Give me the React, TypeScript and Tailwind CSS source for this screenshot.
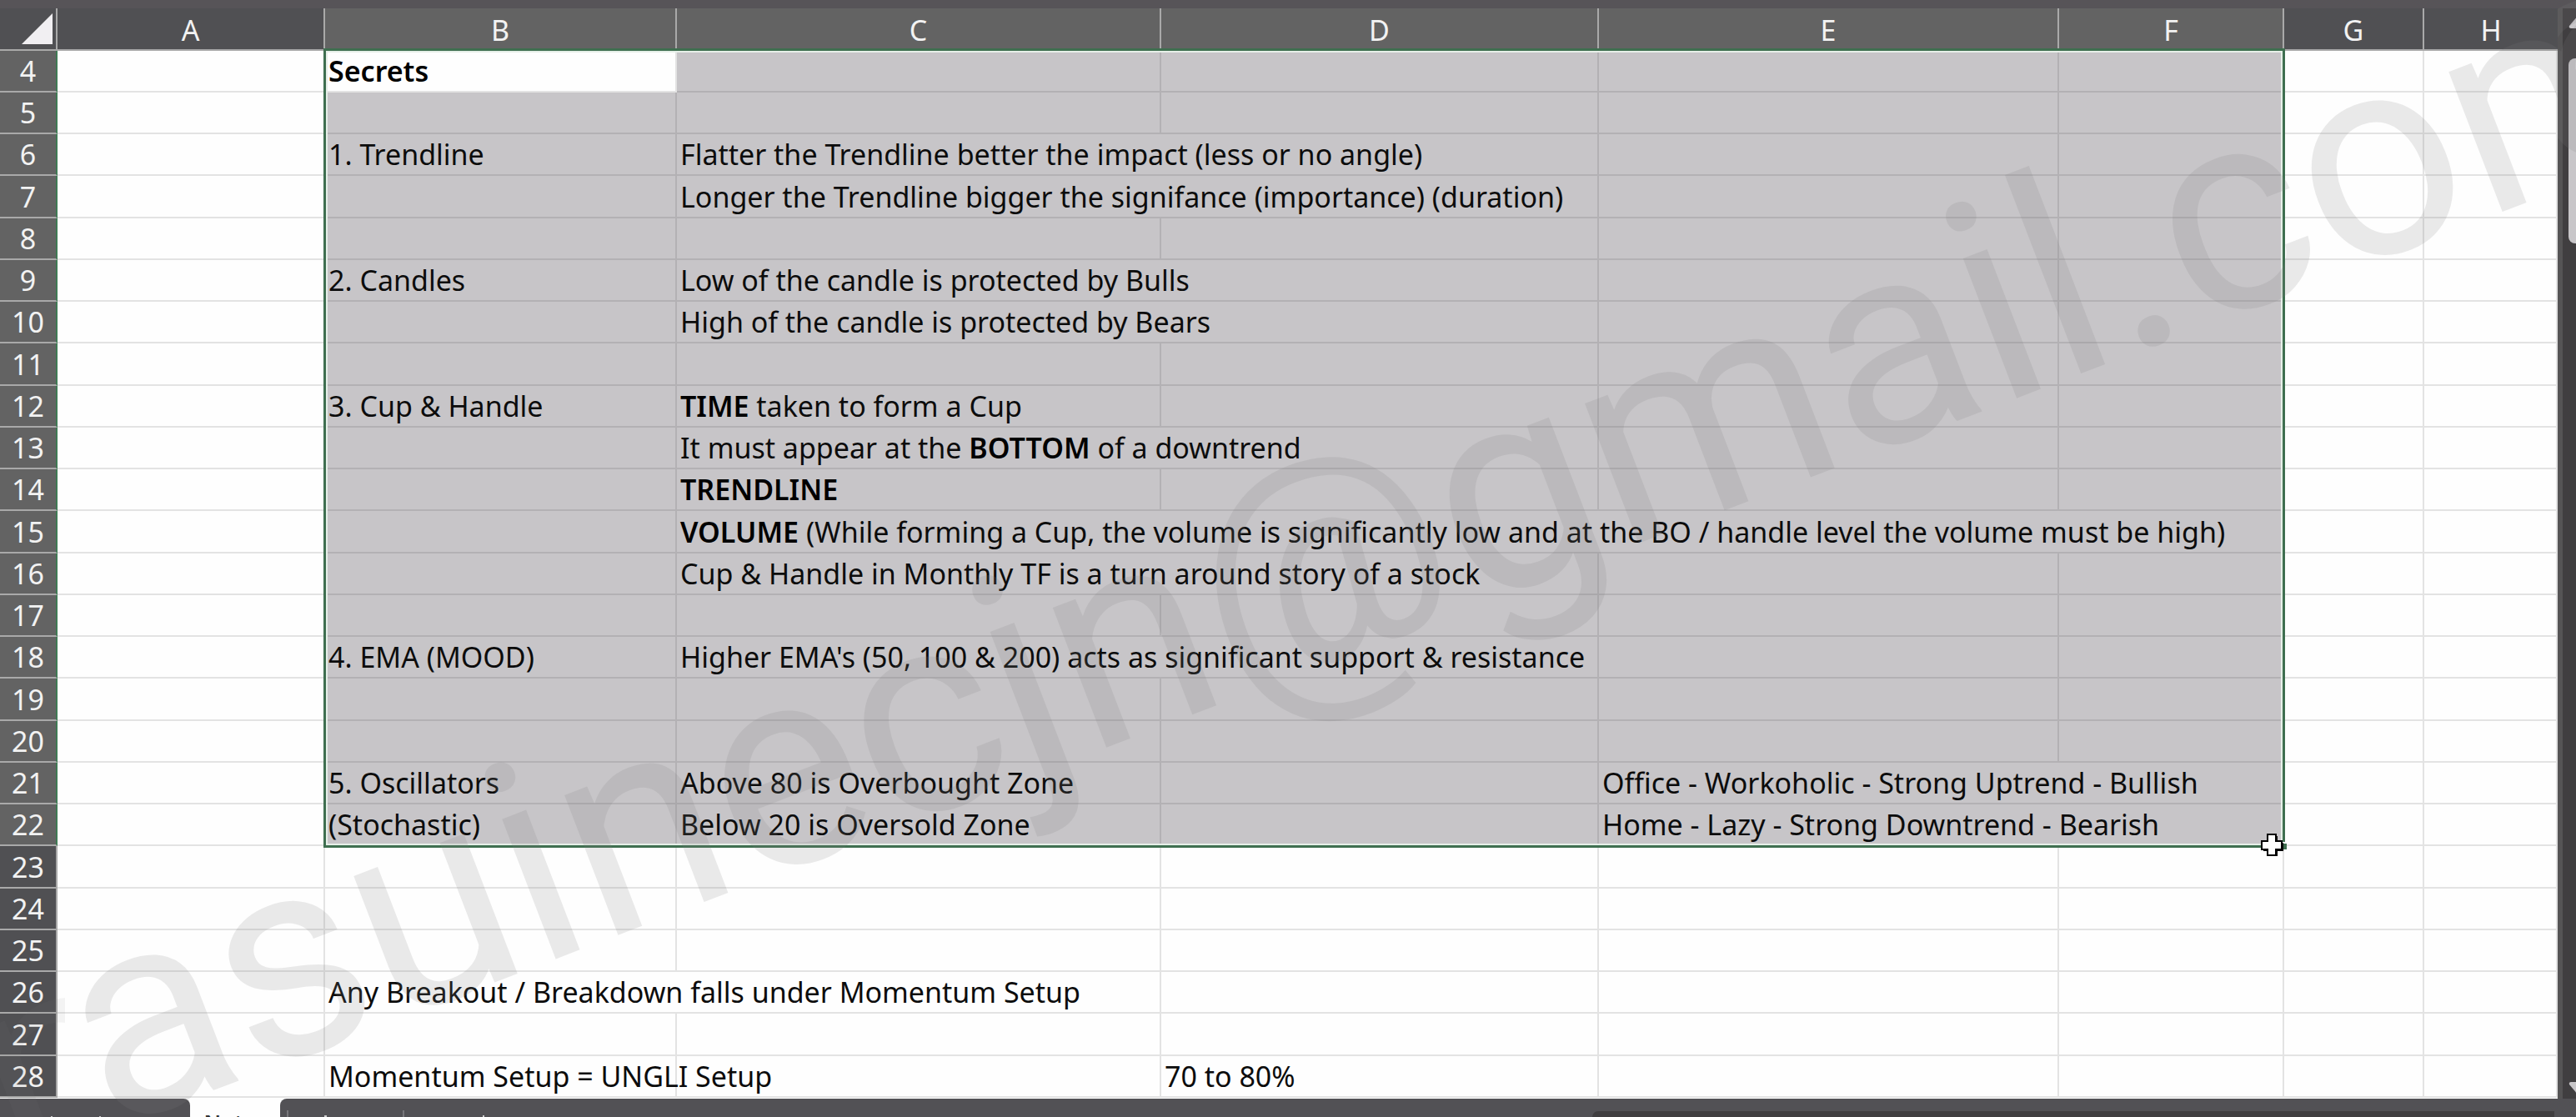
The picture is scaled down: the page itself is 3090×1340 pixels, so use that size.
import React, { ReactNode } from "react";

type Cell = { text: ReactNode; span?: number };
type Col = "A" | "B" | "C" | "D" | "E" | "F" | "G" | "H";

const COLUMNS: { id: Col; width: string }[] = [
  { id: "A", width: "w-[321px]" },
  { id: "B", width: "w-[422px]" },
  { id: "C", width: "w-[581px]" },
  { id: "D", width: "w-[525px]" },
  { id: "E", width: "w-[552px]" },
  { id: "F", width: "w-[270px]" },
  { id: "G", width: "w-[168px]" },
  { id: "H", width: "w-auto" },
];

const ROWS = Array.from({ length: 25 }, (_, i) => i + 4);
const SELECTED: Col[] = ["B", "C", "D", "E", "F"];

const B = ({ children }: { children: ReactNode }) => <b className="font-semibold text-black">{children}</b>;

const CELLS: Record<string, Cell> = {
  B4: { text: <B>Secrets</B> },
  B6: { text: "1. Trendline" },
  C6: { text: "Flatter the Trendline better the impact (less or no angle)", span: 2 },
  C7: { text: "Longer the Trendline bigger the signifance (importance) (duration)", span: 2 },
  B9: { text: "2. Candles" },
  C9: { text: "Low of the candle is protected by Bulls", span: 2 },
  C10: { text: "High of the candle is protected by Bears", span: 2 },
  B12: { text: "3. Cup & Handle" },
  C12: { text: <><B>TIME</B> taken to form a Cup</> },
  C13: { text: <>It must appear at the <B>BOTTOM</B> of a downtrend</>, span: 2 },
  C14: { text: <B>TRENDLINE</B> },
  C15: {
    text: <><B>VOLUME</B> (While forming a Cup, the volume is significantly low and at the BO / handle level the volume must be high)</>,
    span: 4,
  },
  C16: { text: "Cup & Handle in Monthly TF is a turn around story of a stock", span: 2 },
  B18: { text: "4. EMA (MOOD)" },
  C18: { text: "Higher EMA's (50, 100 & 200) acts as significant support & resistance", span: 2 },
  B21: { text: "5. Oscillators" },
  C21: { text: "Above 80 is Overbought Zone" },
  E21: { text: "Office - Workoholic - Strong Uptrend - Bullish", span: 2 },
  B22: { text: "(Stochastic)" },
  C22: { text: "Below 20 is Oversold Zone" },
  E22: { text: "Home - Lazy - Strong Downtrend - Bearish", span: 2 },
  B26: { text: "Any Breakout / Breakdown falls under Momentum Setup", span: 2 },
  B28: { text: "Momentum Setup = UNGLI Setup" },
  D28: { text: "70 to 80%" },
};

function Row({ row }: { row: number }) {
  const rowSelected = row <= 22;
  const cells: ReactNode[] = [];
  for (let i = 0; i < COLUMNS.length; ) {
    const id = COLUMNS[i].id;
    const key = id + row;
    const cell = CELLS[key];
    const span = cell?.span ?? 1;
    const filled = rowSelected && SELECTED.includes(id) && key !== "B4";
    cells.push(
      <td
        key={key}
        colSpan={span}
        className={
          "border-r-2 border-b-2 p-0 pl-1 leading-[48px] " +
          (filled ? "border-[#b3b1b4] bg-[#c7c5c8]" : "border-[#e3e3e3] bg-[#fefefe]")
        }
      >
        {cell?.text}
      </td>
    );
    i += span;
  }
  return (
    <tr className="h-[50px] [&:nth-child(4n)]:h-[51px]">
      <th
        scope="row"
        className={
          "border-r-2 border-b-2 border-b-[#a9a9a9] p-0 text-center font-normal leading-[48px] text-[#f2f2f2] " +
          (rowSelected ? "border-r-[#3f7a54] bg-[#636363]" : "border-r-[#a9a9a9] bg-[#505053]")
        }
      >
        {row}
      </th>
      {cells}
    </tr>
  );
}

function Sheet() {
  return (
    <div className="relative bg-[#fefefe] pb-px">
      <table className="w-full table-fixed border-separate border-spacing-0 whitespace-nowrap text-[34px] text-[#0c0c0c]">
        <colgroup>
          <col className="w-[69px]" />
          {COLUMNS.map((c) => (
            <col key={c.id} className={c.width} />
          ))}
        </colgroup>
        <thead>
          <tr className="h-[51px]">
            <th className="border-r-2 border-b-2 border-[#a9a9a9] bg-[#505053] p-0">
              <button aria-label="Select all" className="flex h-[49px] w-full items-center justify-end pr-1">
                <svg className="h-[37px] w-[37px]" viewBox="0 0 37 37">
                  <path d="M37 0V37H0Z" fill="#f1eff2" />
                </svg>
              </button>
            </th>
            {COLUMNS.map((c) => (
              <th
                key={c.id}
                scope="col"
                className={
                  "border-r-2 border-b-2 border-[#a9a9a9] p-0 pt-[3px] text-center font-normal leading-[46px] text-[#f2f2f2] last:border-r-0 " +
                  (SELECTED.includes(c.id) ? "bg-[#636363]" : "bg-[#505053]")
                }
              >
                {c.id}
              </th>
            ))}
          </tr>
        </thead>
        <tbody>
          {ROWS.map((r) => (
            <Row key={r} row={r} />
          ))}
        </tbody>
      </table>
      <div className="pointer-events-none absolute top-[48px] left-[388px] h-[959px] w-[2353px] border-3 border-[#3f6f50]">
        <div className="h-full w-full border-2 border-[#e6efe8]" />
        <div className="absolute -right-[5px] -bottom-[5px] h-[9px] w-[7px] border-t-2 border-[#fefefe] bg-[#3f6f50]" />
        <svg className="absolute -right-[2px] -bottom-[14px] h-7 w-7" viewBox="0 0 28 28">
          <path d="M10 3h10v8h7v10h-7v6H10v-6H3V11h7z" fill="#000" />
          <path d="M8 1h10v8h7v10h-7v7H8v-7H1V9h7z" fill="#fff" stroke="#000" strokeWidth="2" />
        </svg>
      </div>
    </div>
  );
}

function VerticalScrollbar() {
  return (
    <div className="flex w-[22px] shrink-0 overflow-hidden bg-[#403e40]">
      <div className="w-[6px] shrink-0 bg-[#555455]" />
      <div className="flex flex-1 flex-col pt-2 pl-[7px]">
        <button aria-label="Scroll up" className="h-4 w-6">
          <svg className="h-4 w-6" viewBox="0 0 24 16">
            <path d="M12 0L23 13Q24 16 21 16H3Q0 16 1 13Z" fill="#c8c6c9" />
          </svg>
        </button>
        <div className="mt-9 h-[222px] w-6 rounded-lg bg-[#c8c6c9]" />
        <div className="flex-1" />
        <button aria-label="Scroll down" className="mb-1 h-4 w-6">
          <svg className="h-4 w-6" viewBox="0 0 24 16">
            <path d="M12 16L1 3Q0 0 3 0H21Q24 0 23 3Z" fill="#c8c6c9" />
          </svg>
        </button>
      </div>
    </div>
  );
}

function SheetTabs() {
  return (
    <div className="flex flex-1 items-stretch overflow-hidden bg-[#fefefe]">
      <div className="flex w-[228px] items-end gap-14 rounded-tr-lg bg-[#525155] pl-[61px]">
        <span className="h-px w-[2px] bg-[#cccccc]" />
        <span className="h-px w-[2px] bg-[#cccccc]" />
      </div>
      <button className="w-[108px] pt-3 text-center text-[26px] leading-8 font-semibold text-[#333]">Notes</button>
      <div className="flex flex-1 items-end justify-between rounded-tl-lg bg-[#525155] pl-2">
        <div className="flex items-end">
          <div className="flex h-2 w-[139px] items-end border-l-2 border-[#77767a] pl-[43px]">
            <span className="h-[2px] w-[3px] bg-[#cccccc]" />
          </div>
          <div className="flex h-2 items-end border-l-2 border-[#77767a] pl-[94px]">
            <span className="h-[2px] w-[2px] bg-[#cccccc]" />
          </div>
        </div>
        <div className="mr-[26px] h-[7px] w-[1154px] rounded-tl-lg bg-[#403e40]" />
      </div>
    </div>
  );
}

function Watermark() {
  return (
    <div className="pointer-events-none absolute inset-0 overflow-hidden font-['Roboto',sans-serif] text-[340px] leading-none font-[450] whitespace-nowrap text-[#808080] opacity-[.16]">
      <span className="absolute top-[1070px] left-[131px] origin-[0_286px] -rotate-21">asuinecjn@gmail.com</span>
      <div className="absolute top-0 right-0 h-[340px] w-[22px] overflow-hidden" aria-hidden="true">
        <span className="absolute top-[-79px] left-[-5px] origin-[0_286px] -rotate-21">a</span>
      </div>
      <div className="absolute inset-y-0 left-0 w-[78px] overflow-hidden opacity-50" aria-hidden="true">
        <span className="absolute top-[1125px] left-[21px] origin-[0_286px] -rotate-21">m</span>
      </div>
    </div>
  );
}

export default function App() {
  return (
    <div className="relative flex h-screen flex-col overflow-hidden bg-[#575458] font-['Noto_Sans',sans-serif]">
      <div className="h-[10px] shrink-0" />
      <div className="flex shrink-0">
        <main className="min-w-0 flex-1">
          <Sheet />
        </main>
        <VerticalScrollbar />
      </div>
      <SheetTabs />
      <Watermark />
    </div>
  );
}
